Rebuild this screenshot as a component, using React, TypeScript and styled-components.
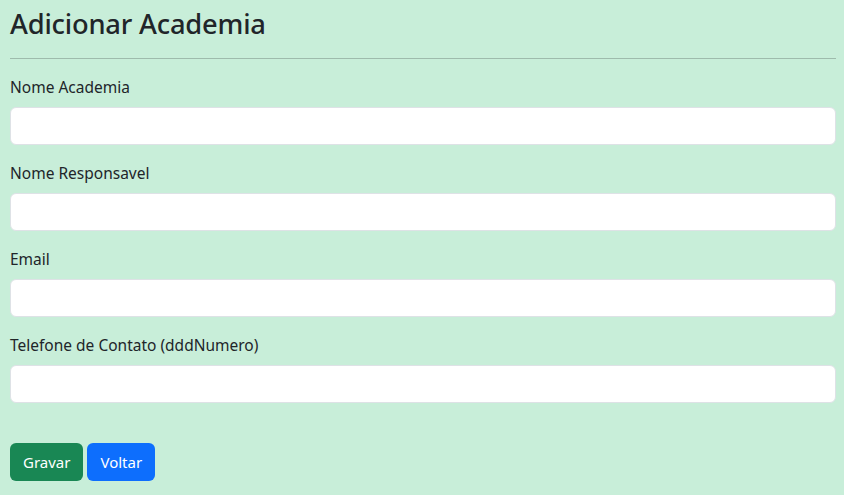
import React from 'react';
import styled, { createGlobalStyle } from 'styled-components';

const GlobalStyle = createGlobalStyle`
    * {
        box-sizing: border-box;
    }
    body {
        margin: 0;
        background: #c8eed9;
        color: #212529;
        font-family: 'Noto Sans', sans-serif;
        font-size: 16px;
        line-height: 1.5;
    }
`;

const Page = styled.div`
    padding: 7px 8px 0 10px;
`;

const Title = styled.h2`
    margin: 0 0 8px;
    font-size: 27.3px;
    font-weight: 500;
    line-height: 34.6px;
    letter-spacing: -0.2px;
`;

const Divider = styled.hr`
    margin: 16px 0;
    border: 0;
    border-top: 1px solid rgba(33, 37, 41, 0.25);
`;

const Field = styled.div`
    display: flex;
    flex-direction: column;
    margin-bottom: 16px;
`;

const Label = styled.label`
    margin-bottom: 8px;
    font-size: 15.5px;
    line-height: 24px;
`;

const Input = styled.input`
    display: block;
    width: 100%;
    height: 38px;
    padding: 6px 12px;
    font: inherit;
    background: #fff;
    border: 1px solid #dee2e6;
    border-radius: 6px;
    outline: none;
`;

const Actions = styled.div`
    display: flex;
    gap: 4px;
    margin-top: 40px;
`;

const Button = styled.button<{ $variant: 'success' | 'primary' }>`
    height: 38px;
    padding: 6px 12px;
    font-family: inherit;
    font-size: 15px;
    line-height: 24px;
    color: #fff;
    border: 1px solid transparent;
    border-radius: 6px;
    background: ${p => (p.$variant === 'success' ? '#198754' : '#0d6efd')};
    cursor: pointer;
`;

const fields = ['Nome Academia', 'Nome Responsavel', 'Email', 'Telefone de Contato (dddNumero)'];

const App = () => {
    return (
        <>
            <GlobalStyle />
            <Page>
                <Title>Adicionar Academia</Title>
                <Divider />
                <form onSubmit={e => e.preventDefault()}>
                    {fields.map(label => (
                        <Field key={label}>
                            <Label>{label}</Label>
                            <Input type="text" />
                        </Field>
                    ))}
                    <Actions>
                        <Button type="submit" $variant="success">Gravar</Button>
                        <Button type="button" $variant="primary">Voltar</Button>
                    </Actions>
                </form>
            </Page>
        </>
    );
};

export default App;
